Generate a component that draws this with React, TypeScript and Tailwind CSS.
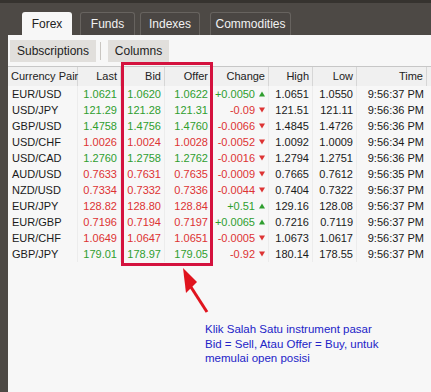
import React from "react";

type Row = {
  pair: string;
  last: string;
  bid: string;
  offer: string;
  change: string;
  high: string;
  low: string;
  time: string;
  up: boolean; // price colour
};

const rows: Row[] = [
  { pair: "EUR/USD", last: "1.0621", bid: "1.0620", offer: "1.0622", change: "+0.0050", high: "1.0651", low: "1.0550", time: "9:56:37 PM", up: true },
  { pair: "USD/JPY", last: "121.29", bid: "121.28", offer: "121.31", change: "-0.09", high: "121.51", low: "121.11", time: "9:56:36 PM", up: true },
  { pair: "GBP/USD", last: "1.4758", bid: "1.4756", offer: "1.4760", change: "-0.0066", high: "1.4845", low: "1.4726", time: "9:56:36 PM", up: true },
  { pair: "USD/CHF", last: "1.0026", bid: "1.0024", offer: "1.0028", change: "-0.0052", high: "1.0092", low: "1.0009", time: "9:56:34 PM", up: false },
  { pair: "USD/CAD", last: "1.2760", bid: "1.2758", offer: "1.2762", change: "-0.0016", high: "1.2794", low: "1.2751", time: "9:56:36 PM", up: true },
  { pair: "AUD/USD", last: "0.7633", bid: "0.7631", offer: "0.7635", change: "-0.0009", high: "0.7665", low: "0.7612", time: "9:56:35 PM", up: false },
  { pair: "NZD/USD", last: "0.7334", bid: "0.7332", offer: "0.7336", change: "-0.0044", high: "0.7404", low: "0.7322", time: "9:56:37 PM", up: false },
  { pair: "EUR/JPY", last: "128.82", bid: "128.80", offer: "128.84", change: "+0.51", high: "129.16", low: "128.08", time: "9:56:37 PM", up: false },
  { pair: "EUR/GBP", last: "0.7196", bid: "0.7194", offer: "0.7197", change: "+0.0065", high: "0.7216", low: "0.7119", time: "9:56:37 PM", up: false },
  { pair: "EUR/CHF", last: "1.0649", bid: "1.0647", offer: "1.0651", change: "-0.0005", high: "1.0673", low: "1.0617", time: "9:56:37 PM", up: false },
  { pair: "GBP/JPY", last: "179.01", bid: "178.97", offer: "179.05", change: "-0.92", high: "180.14", low: "178.55", time: "9:56:37 PM", up: true },
];

const cols = "grid grid-cols-[70px_43px_44px_47px_57px_44px_44px_70px]";

function Tab({ label, active, w }: { label: string; active?: boolean; w: string }) {
  return (
    <div
      className={`${w} h-[23px] flex items-center justify-center rounded-t-[3px] text-[12px] ${
        active
          ? "bg-[#f7f7f7] text-[#222]"
          : "bg-[#4a4643] text-[#f2f2f2] border border-b-0 border-[#67635f]"
      }`}
    >
      {label}
    </div>
  );
}

function Arrow({ up }: { up: boolean }) {
  return (
    <svg width="6" height="6" viewBox="0 0 6 6" className="ml-[4px] mb-[1px] shrink-0">
      {up ? <path d="M3 0.5L6 5.5H0Z" fill="#2f9e2f" /> : <path d="M0 0.5H6L3 5.5Z" fill="#dd3333" />}
    </svg>
  );
}

export default function App() {
  return (
    <div className="relative w-[431px] h-[392px] bg-[#4d4945] flex flex-col font-['Liberation_Sans',sans-serif] overflow-hidden">
      <div className="h-[3px] bg-[#36332f]" />
      {/* tabs */}
      <div className="flex items-end h-[32px] pl-[22px]">
        <Tab label="Forex" active w="w-[50px]" />
        <div className="w-[8px]" />
        <Tab label="Funds" w="w-[55px]" />
        <div className="w-[5px]" />
        <Tab label="Indexes" w="w-[60px]" />
        <div className="w-[10px]" />
        <Tab label="Commodities" w="w-[81px]" />
      </div>

      <div className="flex-1 flex">
        <div className="w-[8px]" />
        <div className="flex-1 bg-[#f7f7f7] flex flex-col">
          {/* toolbar */}
          <div className="h-[31px] flex items-start pt-[5px] pl-[2px] text-[12px] text-[#222]">
            <div className="w-[86px] h-[22px] bg-[#e1dfdc] flex items-center justify-center">Subscriptions</div>
            <div className="w-[1px] h-[18px] bg-[#c9c6c2] mx-[4px] mt-[2px]" />
            <div className="w-[61px] h-[22px] bg-[#e1dfdc] flex items-center justify-center ml-[3px]">Columns</div>
          </div>

          {/* table */}
          <div className="text-[11px] whitespace-nowrap">
            <div className={`${cols} h-[20px] bg-[#f0f0f0] border-t border-[#c7c7c7] text-[#222]`}>
              {["Currency Pair", "Last", "Bid", "Offer", "Change", "High", "Low", "Time"].map((h, i) => (
                <div
                  key={h}
                  className={`flex items-center border-r border-[#d6d6d6] ${i === 0 ? "pl-[3px]" : "justify-end pr-[3px]"}`}
                >
                  {h}
                </div>
              ))}
            </div>
            {rows.map((r) => {
              const price = r.up ? "text-[#2f9e2f]" : "text-[#dd3333]";
              const chUp = r.change.startsWith("+");
              return (
                <div key={r.pair} className={`${cols} h-[16px] leading-[16px]`}>
                  <div className="pl-[4px] text-[#1a1a1a] border-r border-[#ececec]">{r.pair}</div>
                  <div className={`text-right pr-[3px] border-r border-[#ececec] ${price}`}>{r.last}</div>
                  <div className={`text-right pr-[3px] border-r border-[#ececec] ${price}`}>{r.bid}</div>
                  <div className={`text-right pr-[3px] border-r border-[#ececec] ${price}`}>{r.offer}</div>
                  <div
                    className={`flex items-center justify-end pr-[3px] border-r border-[#ececec] ${
                      chUp ? "text-[#2f9e2f]" : "text-[#dd3333]"
                    }`}
                  >
                    {r.change}
                    <Arrow up={chUp} />
                  </div>
                  <div className="text-right pr-[3px] text-[#1a1a1a] border-r border-[#ececec]">{r.high}</div>
                  <div className="text-right pr-[3px] text-[#1a1a1a] border-r border-[#ececec]">{r.low}</div>
                  <div className="text-right pr-[3px] text-[#1a1a1a]">{r.time}</div>
                </div>
              );
            })}
          </div>

          {/* annotation */}
          <div className="mt-[60px] pl-[197px] text-[11.5px] leading-[14.5px] text-[#2323c8]">
            <p>Klik Salah Satu instrument pasar</p>
            <p>Bid = Sell, Atau Offer = Buy, untuk</p>
            <p>memulai open posisi</p>
          </div>
        </div>
      </div>

      {/* red highlight over Bid / Offer */}
      <div className="absolute left-[121px] top-[62px] w-[92px] h-[204px] border-[3px] border-[#d4123e] pointer-events-none" />
      <svg className="absolute left-0 top-0 pointer-events-none" width="431" height="392">
        <line x1="207" y1="312" x2="189" y2="284" stroke="#e0141e" strokeWidth="3" />
        <path d="M183 268L197 282L186 293Z" fill="#e0141e" />
      </svg>
    </div>
  );
}
